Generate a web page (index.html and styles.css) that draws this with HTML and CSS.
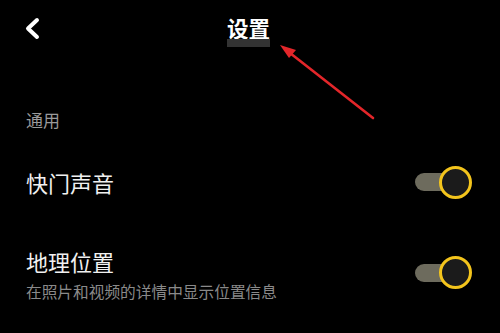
FILE: index.html
```html
<!DOCTYPE html>
<html lang="zh">
<head>
<meta charset="utf-8">
<link rel="stylesheet" href="styles.css">
</head>
<body>
<div class="page">
  <header class="header">
    <div class="back">
      <svg width="16" height="24" viewBox="0 0 16 24"><polyline points="12,3 3,11.5 12,20" fill="none" stroke="#fff" stroke-width="4" stroke-linecap="round" stroke-linejoin="round"/></svg>
    </div>
    <div class="title-wrap">
      <div class="title">设置</div>
      <div class="title-bar"></div>
    </div>
    <div></div>
  </header>

  <div class="section-label">通用</div>

  <div class="row row-single">
    <div class="row-title">快门声音</div>
    <div class="toggle"><div class="track"></div><div class="knob"></div></div>
  </div>

  <div class="row row-double">
    <div class="row-text">
      <div class="row-title">地理位置</div>
      <div class="row-sub">在照片和视频的详情中显示位置信息</div>
    </div>
    <div class="toggle toggle-offset"><div class="track"></div><div class="knob"></div></div>
  </div>

  <svg class="annotation" width="500" height="333" viewBox="0 0 500 333">
    <line x1="373" y1="118" x2="290" y2="53" stroke="#e3262a" stroke-width="2.6" stroke-linecap="round"/>
    <polygon points="280,45 296,50 289,58" fill="#e3262a"/>
  </svg>
</div>
</body>
</html>
```

FILE: styles.css
```css
* { box-sizing: border-box; }
html, body {
  margin: 0;
  padding: 0;
  background: #000;
}
body {
  width: 500px;
  height: 333px;
  overflow: hidden;
  font-family: "Noto Sans CJK SC", "Noto Sans", sans-serif;
  color: #f2f2f2;
}
.page {
  position: relative;
  width: 500px;
  height: 333px;
  padding: 0 28px 0 26px;
}
.header {
  display: grid;
  grid-template-columns: 1fr auto 1fr;
  align-items: start;
  padding-top: 16px;
  height: 48px;
}
.back {
  padding-top: 1px;
  margin-left: -1px;
  display: flex;
}
.title-wrap {
  display: flex;
  flex-direction: column;
  align-items: center;
  margin-left: -1px;
}
.title {
  font-size: 21.5px;
  font-weight: 700;
  line-height: 23px;
  color: #fff;
}
.title-bar {
  width: 43px;
  height: 8px;
  background: #333;
}
.section-label {
  margin-top: 62px;
  font-size: 17px;
  line-height: 20px;
  color: #9a9a9a;
}
.row {
  display: flex;
  justify-content: space-between;
}
.row-single {
  margin-top: 28px;
  height: 48px;
  align-items: center;
}
.row-double {
  margin-top: 41px;
  align-items: flex-start;
}
.row-title {
  font-size: 22px;
  line-height: 28px;
  color: #f0f0f0;
}
.row-sub {
  margin-top: 6px;
  font-size: 15.7px;
  line-height: 22px;
  color: #8a8a8a;
}
.toggle {
  position: relative;
  width: 57px;
  height: 33px;
  display: flex;
  align-items: center;
}
.toggle-offset {
  margin-top: 9px;
}
.track {
  width: 42px;
  height: 18px;
  border-radius: 9px;
  background: #6d6b5d;
}
.knob {
  position: absolute;
  right: 0;
  top: 0;
  width: 33px;
  height: 33px;
  border-radius: 50%;
  border: 3.5px solid #f3c41c;
  background: #1b1b1b;
}
.annotation {
  position: absolute;
  left: 0;
  top: 0;
  pointer-events: none;
}
```
